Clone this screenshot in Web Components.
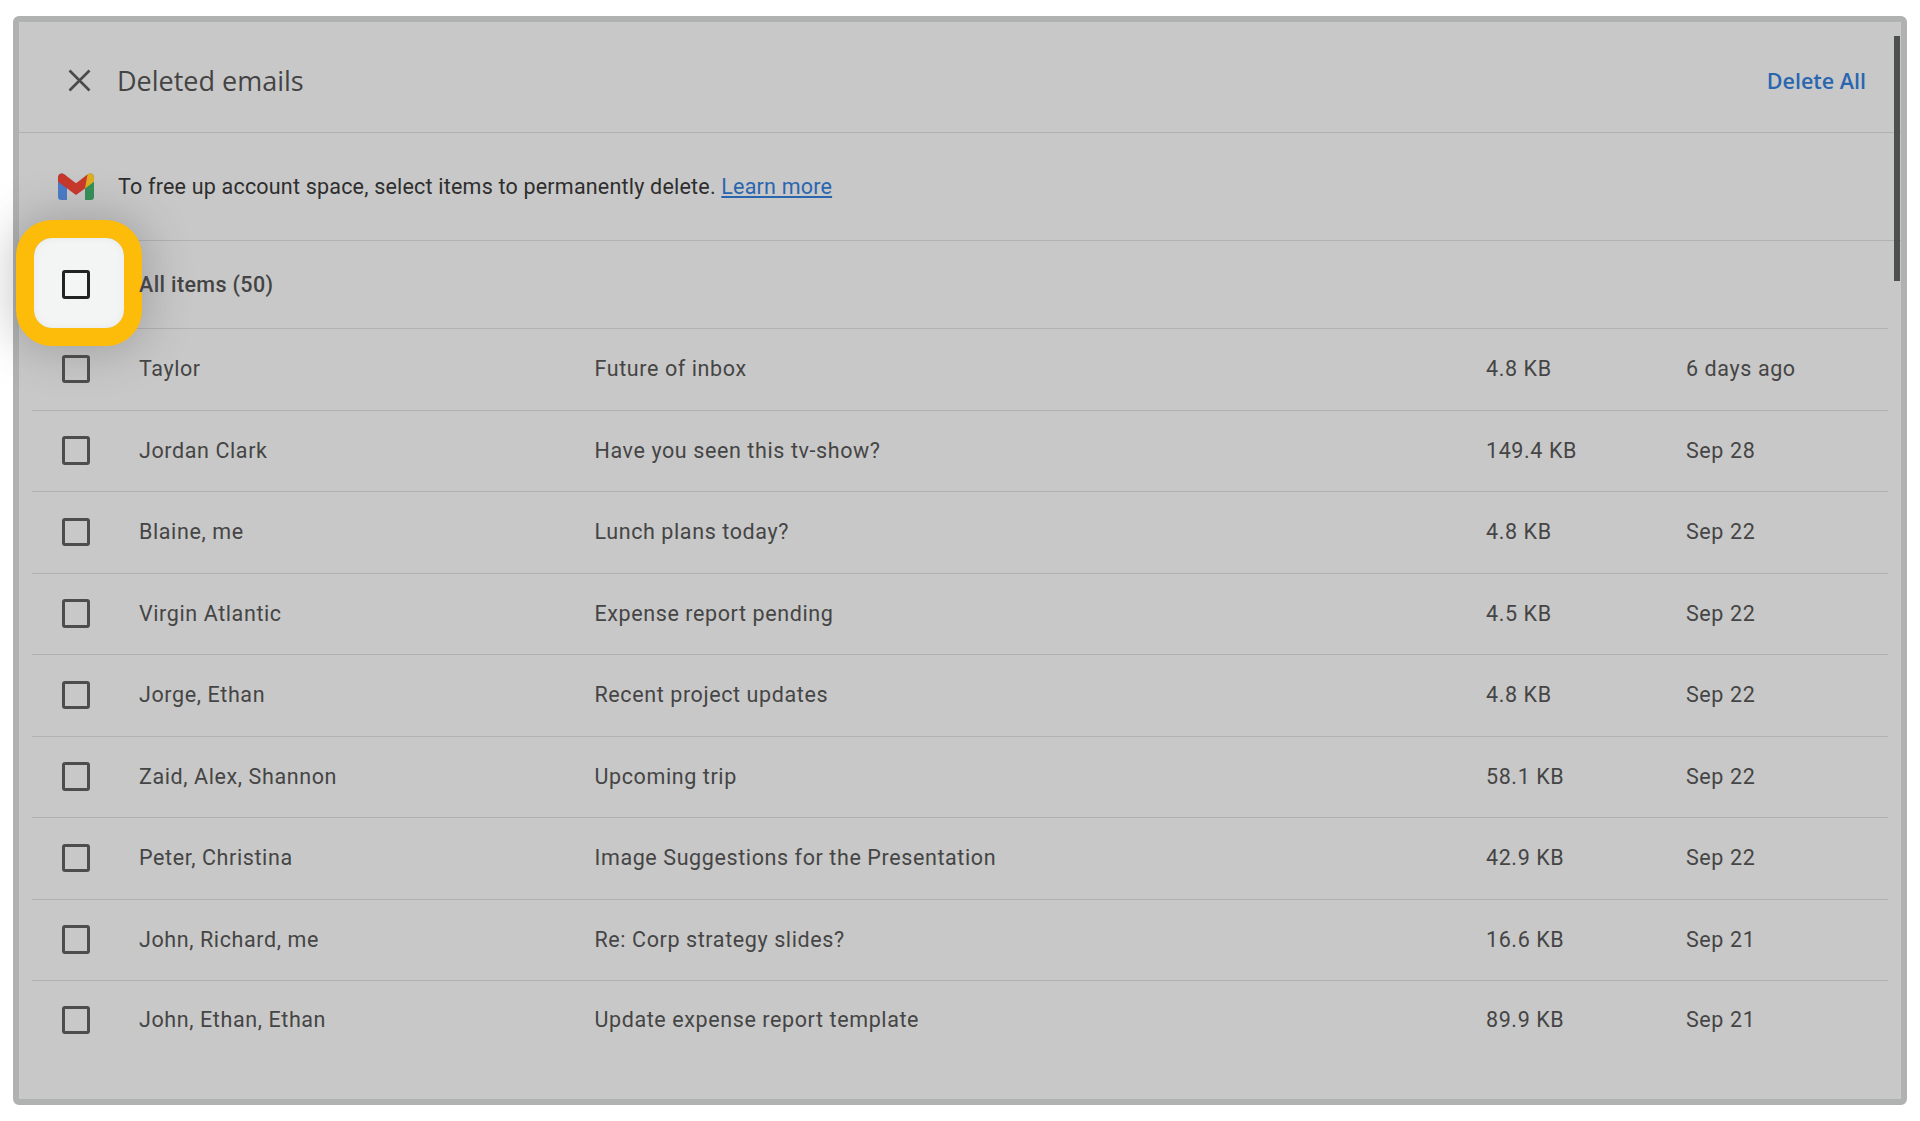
<!DOCTYPE html>
<html lang="en">
<head>
<meta charset="utf-8">
<title>Deleted emails</title>
<style>
  html, body { margin: 0; background: #fff; }
  body { padding: 16px 13px; font-family: Roboto, "Liberation Sans", sans-serif; }
</style>
</head>
<body>
<deleted-panel>
  <panel-header slot="header" title-text="Deleted emails" action="Delete All"></panel-header>
  <info-bar slot="info">To free up account space, select items to permanently delete. <a href="#">Learn more</a></info-bar>
  <all-items slot="all">All items (50)</all-items>
  <mail-row><span slot="name">Taylor</span><span slot="subject">Future of inbox</span><span slot="size">4.8 KB</span><span slot="date">6 days ago</span></mail-row>
  <mail-row><span slot="name">Jordan Clark</span><span slot="subject">Have you seen this tv-show?</span><span slot="size">149.4 KB</span><span slot="date">Sep 28</span></mail-row>
  <mail-row><span slot="name">Blaine, me</span><span slot="subject">Lunch plans today?</span><span slot="size">4.8 KB</span><span slot="date">Sep 22</span></mail-row>
  <mail-row><span slot="name">Virgin Atlantic</span><span slot="subject">Expense report pending</span><span slot="size">4.5 KB</span><span slot="date">Sep 22</span></mail-row>
  <mail-row><span slot="name">Jorge, Ethan</span><span slot="subject">Recent project updates</span><span slot="size">4.8 KB</span><span slot="date">Sep 22</span></mail-row>
  <mail-row><span slot="name">Zaid, Alex, Shannon</span><span slot="subject">Upcoming trip</span><span slot="size">58.1 KB</span><span slot="date">Sep 22</span></mail-row>
  <mail-row><span slot="name">Peter, Christina</span><span slot="subject">Image Suggestions for the Presentation</span><span slot="size">42.9 KB</span><span slot="date">Sep 22</span></mail-row>
  <mail-row><span slot="name">John, Richard, me</span><span slot="subject">Re: Corp strategy slides?</span><span slot="size">16.6 KB</span><span slot="date">Sep 21</span></mail-row>
  <mail-row last><span slot="name">John, Ethan, Ethan</span><span slot="subject">Update expense report template</span><span slot="size">89.9 KB</span><span slot="date">Sep 21</span></mail-row>
</deleted-panel>

<script>
class DeletedPanel extends HTMLElement {
  constructor() {
    super();
    this.attachShadow({ mode: "open" });
    this.shadowRoot.innerHTML = `<style>
      :host {
        display: block;
        position: relative;
        box-sizing: border-box;
        width: 1894px;
        height: 1089px;
        background: #c8c8c8;
        border: 6px solid #b0b2b1;
        border-radius: 6px;
        color: #454545;
      }
      .rows { display: block; margin: 0 13px; }
      .scrollbar {
        position: absolute;
        top: 14px;
        right: 1px;
        width: 6px;
        height: 245px;
        background: #4e504f;
      }
    </style>
    <slot name="header"></slot>
    <slot name="info"></slot>
    <div class="rows">
      <slot name="all"></slot>
      <slot></slot>
    </div>
    <div class="scrollbar"></div>`;
  }
}

class PanelHeader extends HTMLElement {
  constructor() {
    super();
    this.attachShadow({ mode: "open" });
  }

  connectedCallback() {
    this.shadowRoot.innerHTML = `<style>
      :host {
        display: flex;
        align-items: center;
        box-sizing: border-box;
        height: 111px;
        padding: 6px 35px 0 49px;
        border-bottom: 1.5px solid #b0b1b0;
      }
      svg { width: 23px; height: 23px; flex: none; }
      h1 {
        margin: 0 0 0 26px;
        flex: 1;
        font: 400 27px "Open Sans", sans-serif;
        color: #444;
      }
      a {
        font: 600 21.5px "Open Sans", sans-serif;
        color: #2a66b0;
        text-decoration: none;
      }
    </style>
    <svg viewBox="0 0 23 23"><path d="M1.5 1.5 21.5 21.5M21.5 1.5 1.5 21.5" fill="none" stroke="#4a4a4a" stroke-width="2.6"/></svg>
    <h1>${this.getAttribute("title-text")}</h1>
    <a href="#">${this.getAttribute("action")}</a>`;
  }
}

class InfoBar extends HTMLElement {
  constructor() {
    super();
    this.attachShadow({ mode: "open" });
    this.shadowRoot.innerHTML = `<style>
      :host {
        display: flex;
        align-items: center;
        box-sizing: border-box;
        height: 108px;
        padding: 0 0 0 39px;
        border-bottom: 1.5px solid #b0b1b0;
        font-size: 21.5px;
        letter-spacing: .2px;
        color: #2e2e2e;
      }
      svg { width: 36px; height: 27px; flex: none; margin-right: 24px; }
      ::slotted(a) { color: #2a66b0; }
    </style>
    <svg viewBox="0 0 36 27">
      <path d="M0 4.5C0 1 3.5-.8 6.5 1.4L9 3.4V27H3C1.3 27 0 25.7 0 24Z" fill="#4a7cc7"/>
      <path d="M27 3.4 29.5 1.4C32.5-.8 36 1 36 4.5V24C36 25.7 34.7 27 33 27H27Z" fill="#34905a"/>
      <path d="M27 3.4 29.5 1.4C32.5-.8 36 1 36 4.5V8.7L27 15.5Z" fill="#e0ae20"/>
      <path d="M0 4.5C0 1 3.5-.8 6.5 1.4L18 10.2 29.5 1.4 27 15.5 18 22 0 8.7Z" fill="#c9382c"/>
    </svg>
    <span><slot></slot></span>`;
  }
}

class CheckBox extends HTMLElement {
  constructor() {
    super();
    this.attachShadow({ mode: "open" });
    this.shadowRoot.innerHTML = `<style>
      :host {
        display: block;
        position: relative;
        box-sizing: border-box;
        width: 28.5px;
        height: 28.5px;
        border: 3.5px solid #4d4d4d;
        border-radius: 3px;
      }
      :host([spotlight]) { border-color: #222; background: #f4f5f5; }
      /* yellow callout painted over the panel, behind the box itself */
      .spot {
        display: none;
        position: absolute;
        z-index: -1;
        left: -49px;
        top: -53px;
        width: 90px;
        height: 90px;
        border: 18px solid #fdbb0a;
        border-radius: 36px;
        background: #f3f4f4;
        background-clip: padding-box;
        box-shadow: 0 0 44px 6px rgba(70, 70, 70, .28), inset 0 0 8px rgba(0, 0, 0, .05);
      }
      :host([spotlight]) .spot { display: block; }
    </style>
    <div class="spot"></div>`;
  }
}

const rowGrid = `
  display: grid;
  grid-template-columns: 107.5px 455.5px 891.5px 200px 1fr;
  align-items: center;
  box-sizing: border-box;
  padding-left: 29.5px;
`;

class AllItems extends HTMLElement {
  constructor() {
    super();
    this.attachShadow({ mode: "open" });
    this.shadowRoot.innerHTML = `<style>
      :host {
        ${rowGrid}
        position: relative;
        z-index: 1;
        height: 88px;
        border-bottom: 1.5px solid #b0b1b0;
        font-size: 21.5px;
        font-weight: 500;
        letter-spacing: .37px;
        color: #444;
      }
      .label { grid-column: 2 / -1; margin-left: -30px; }
    </style>
    <check-box spotlight></check-box>
    <span class="label"><slot></slot></span>`;
  }
}

class MailRow extends HTMLElement {
  constructor() {
    super();
    this.attachShadow({ mode: "open" });
    this.shadowRoot.innerHTML = `<style>
      :host {
        ${rowGrid}
        height: 81.5px;
        padding-bottom: 1px;
        border-bottom: 1.5px solid #b0b1b0;
        font-size: 21.5px;
        letter-spacing: .6px;
        color: #454545;
      }
      :host([last]) { border-bottom: 0; padding-bottom: 4px; }
      .name, .subject, .size, .date { margin-left: -30px; }
    </style>
    <check-box></check-box>
    <span class="name"><slot name="name"></slot></span>
    <span class="subject"><slot name="subject"></slot></span>
    <span class="size"><slot name="size"></slot></span>
    <span class="date"><slot name="date"></slot></span>`;
  }
}

customElements.define("deleted-panel", DeletedPanel);
customElements.define("panel-header", PanelHeader);
customElements.define("info-bar", InfoBar);
customElements.define("check-box", CheckBox);
customElements.define("all-items", AllItems);
customElements.define("mail-row", MailRow);
</script>
</body>
</html>
